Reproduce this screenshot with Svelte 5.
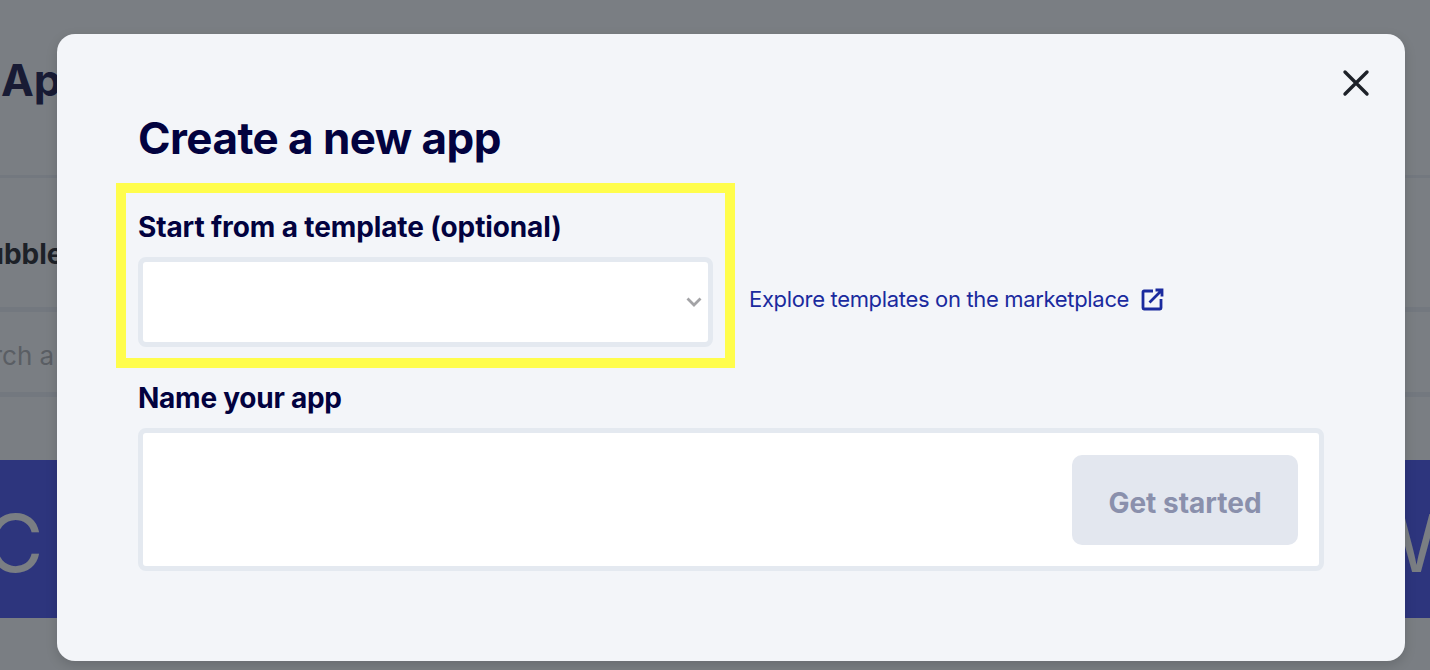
<script>
  let template = $state("");
  let appName = $state("");
</script>

<div class="page">
  <header class="top">
    <h2>Apps</h2>
  </header>
  <div class="tabs"><span>Bubble</span></div>
  <div class="search"><span>Search a</span></div>
  <div class="band">
    <span class="band-left">C</span>
    <span class="band-right">W</span>
  </div>

  <div class="backdrop"></div>

  <div class="modal">
    <button class="close" aria-label="Close">
      <svg width="28" height="28" viewBox="0 0 28 28" fill="none" stroke="currentColor" stroke-width="3.4" stroke-linecap="round">
        <path d="M3 3l22 22M25 3L3 25" />
      </svg>
    </button>

    <h1>Create a new app</h1>

    <div class="template-row">
      <div class="highlight">
        <label for="template">Start from a template (optional)</label>
        <div class="select">
          <input id="template" bind:value={template} />
          <svg class="chevron" width="16" height="10" viewBox="0 0 16 10" fill="none" stroke="currentColor" stroke-width="2.8">
            <path d="M1.5 1.5L8 8l6.5-6.5" />
          </svg>
        </div>
      </div>
      <a class="market" href="#marketplace">
        Explore templates on the marketplace
        <svg width="23" height="23" viewBox="0 0 23 23" fill="none" stroke="currentColor" stroke-width="2.8">
          <path d="M12 3H3a1 1 0 0 0-1 1v16a1 1 0 0 0 1 1h16a1 1 0 0 0 1-1v-9" />
          <path d="M14.500 2H21v6.500M21 2L8.500 14.500" />
        </svg>
      </a>
    </div>

    <label class="name-label" for="name">Name your app</label>
    <div class="name-box">
      <input id="name" bind:value={appName} />
      <button class="start" disabled>Get started</button>
    </div>
  </div>
</div>

<style>
  :global(body) {
    margin: 0;
    font-family: Inter, "Liberation Sans", sans-serif;
  }

  .page {
    position: relative;
    height: 670px;
    overflow: hidden;
    background: #f4f8fd;
  }

  .top {
    height: 175px;
    border-bottom: 3px solid #e6edf5;
    padding-left: 1px;
  }

  .top h2 {
    margin: 0;
    padding-top: 52px;
    font-size: 44px;
    line-height: 56px;
    font-weight: 700;
    color: #30335f;
  }

  .tabs {
    height: 134px;
    box-sizing: border-box;
    border-bottom: 5px solid #e6edf5;
    margin-left: -32px;
    padding-top: 56px;
    font-size: 28px;
    line-height: 40px;
    font-weight: 700;
    color: #3a3f46;
  }

  .search {
    height: 85px;
    box-sizing: border-box;
    border-bottom: 5px solid #e6edf5;
    margin-left: -54px;
    padding-top: 24px;
    font-size: 26px;
    line-height: 40px;
    color: #b4b8be;
  }

  .band {
    margin-top: 63px;
    height: 158px;
    padding-top: 8px;
    box-sizing: border-box;
    background: #5b67f0;
    display: flex;
    justify-content: space-between;
    align-items: center;
    color: #f4f8fd;
    font-size: 80px;
    font-weight: 400;
    line-height: 1;
  }

  .band-left {
    margin-left: -15px;
  }

  .band-right {
    margin-right: -43px;
  }

  .backdrop {
    position: absolute;
    inset: 0;
    background: rgba(0, 3, 10, 0.5);
  }

  .modal {
    position: absolute;
    top: 34px;
    left: 57px;
    width: 1348px;
    height: 627px;
    box-sizing: border-box;
    padding: 73px 81px 0;
    background: #f3f5f9;
    border-radius: 18px;
    box-shadow: 0 4px 12px rgba(0, 0, 0, 0.15);
  }

  .close {
    position: absolute;
    top: 35px;
    right: 35px;
    padding: 0;
    width: 28px;
    height: 28px;
    border: 0;
    background: none;
    color: #1d2129;
  }

  .close svg {
    display: block;
  }

  h1 {
    margin: 0;
    font-size: 44px;
    line-height: 62px;
    font-weight: 700;
    letter-spacing: -0.55px;
    color: #02023f;
  }

  .template-row {
    display: flex;
    align-items: flex-start;
    margin: 14px 0 0 -22px;
  }

  .highlight {
    width: 619px;
    height: 185px;
    box-sizing: border-box;
    border: 10px solid #fffd4c;
    padding: 13px 12px 0;
  }

  label {
    display: block;
    font-size: 28px;
    line-height: 42px;
    font-weight: 700;
    letter-spacing: -0.12px;
    color: #02023f;
  }

  .select {
    position: relative;
    width: 575px;
    height: 90px;
    margin-top: 9px;
  }

  input {
    display: block;
    width: 100%;
    height: 100%;
    box-sizing: border-box;
    border: 5px solid #e4e9f0;
    border-radius: 8px;
    background: #fff;
    outline: none;
  }

  .chevron {
    position: absolute;
    top: 40px;
    right: 11px;
    color: #a3a3a6;
  }

  .market {
    display: flex;
    align-items: center;
    gap: 12px;
    margin: 92px 0 0 14px;
    font-size: 22px;
    line-height: 48px;
    letter-spacing: -0.33px;
    color: #1a2a9e;
    text-decoration: none;
  }

  .name-label {
    margin-top: 9px;
    letter-spacing: -0.25px;
  }

  .name-box {
    position: relative;
    height: 143px;
    margin-top: 9px;
  }

  .start {
    position: absolute;
    top: 27px;
    right: 26px;
    width: 226px;
    height: 90px;
    padding: 6px 0 0;
    border: 0;
    border-radius: 10px;
    background: #e3e7ef;
    color: #8a90ac;
    font-family: inherit;
    font-size: 28px;
    font-weight: 700;
  }
</style>
